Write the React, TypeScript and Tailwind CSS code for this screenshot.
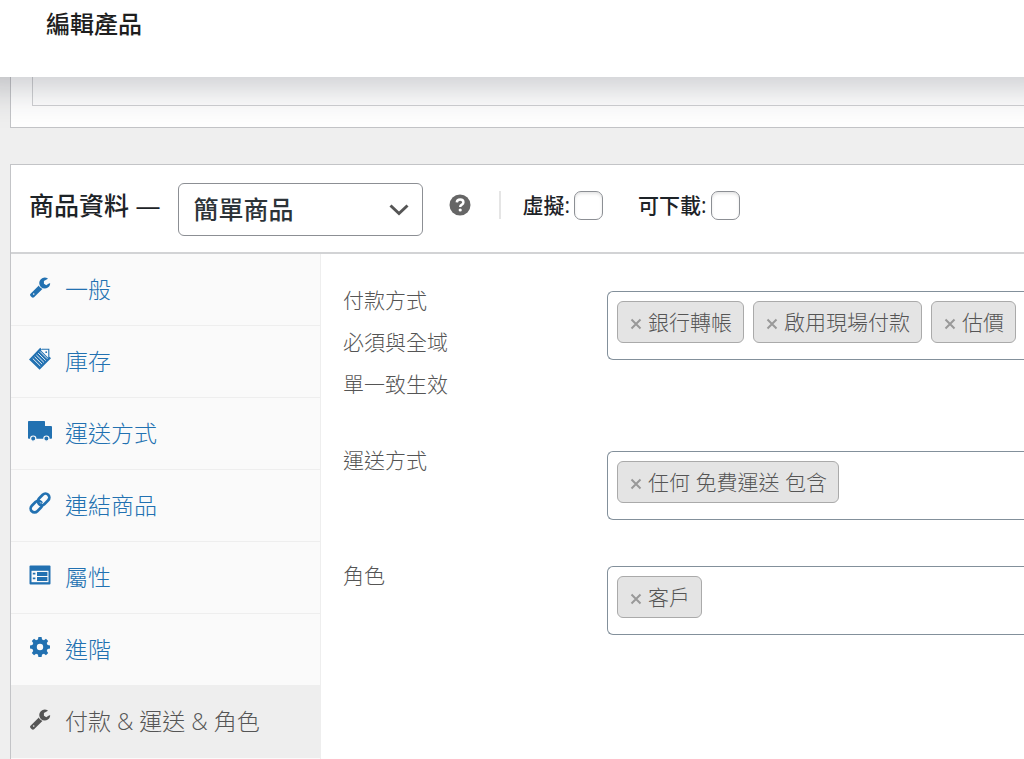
import { useState, type ReactNode } from "react";

function WrenchIcon() {
  return (
    <svg viewBox="0 0 1792 1792" className="size-[22px]" fill="currentColor" aria-hidden="true">
      <path d="M448 1472q0-26-19-45t-45-19-45 19-19 45 19 45 45 19 45-19 19-45zm644-420l-682 682q-37 37-90 37-52 0-91-37l-106-108q-38-36-38-90 0-53 38-91l681-681q39 98 114.5 173.5t173.5 114.5zm634-435q0 39-23 106-47 134-164.5 217.5t-258.5 83.5q-185 0-316.5-131.5t-131.5-316.5 131.5-316.5 316.5-131.5q58 0 121.5 16.5t107.5 46.5q16 11 16 28t-16 28l-293 169v224l193 107q5-3 79-48.5t135.5-81 70.5-35.5q15 0 23.5 10t8.5 25z" />
    </svg>
  );
}

function InventoryIcon() {
  return (
    <svg viewBox="0 0 24 24" className="size-6" fill="none" aria-hidden="true">
      <path d="M14 2.2h6.8v8.6" stroke="currentColor" strokeWidth="1.1" />
      <circle cx="18.2" cy="5.2" r=".9" fill="currentColor" />
      <path d="M12.2 .8L13.9 2.4L13 3.6L20.2 10.8L21.6 9.8L23 11.2L11.6 22.8L1 12.4z" fill="currentColor" />
      <path d="M12 4.4L19.4 11.8M10.2 6.2L17.7 13.6M8.4 8L15.9 15.4M6.6 9.8L14.1 17.2M4.8 11.6L12.3 19" stroke="#fafafa" strokeWidth=".9" />
    </svg>
  );
}

function TruckIcon() {
  return (
    <svg viewBox="0 0 24 24" className="size-6" aria-hidden="true">
      <path d="M.8 2h15.4q.8 0 .8.8V7h6q1 0 1 1v11q0 .8-.8.8H.8q-.8 0-.8-.8V2.8Q0 2 .8 2z" fill="currentColor" />
      <g fill="currentColor" stroke="#fafafa" strokeWidth="1.2">
        <circle cx="5.2" cy="19.6" r="2.6" />
        <circle cx="18.4" cy="19.6" r="2.6" />
      </g>
    </svg>
  );
}

function ChainIcon() {
  return (
    <svg viewBox="0 0 24 24" className="size-6" fill="none" aria-hidden="true">
      <g transform="rotate(-45 12 12)" stroke="currentColor" strokeWidth="2.7">
        <rect x="0.4" y="8.1" width="13" height="7.8" rx="3.9" />
        <path d="M12.5 15.9h7.2" stroke="#fafafa" strokeWidth="4.6" />
        <path d="M11.2 12.6V12" stroke="#fafafa" strokeWidth="4.6" />
        <rect x="10.6" y="8.1" width="13" height="7.8" rx="3.9" />
      </g>
    </svg>
  );
}

function AttributesIcon() {
  return (
    <svg viewBox="0 0 22 20" className="h-5 w-[22px]" aria-hidden="true">
      <rect x=".5" y=".5" width="21" height="19" rx="1" fill="currentColor" />
      <path d="M2.5 5.8h17v11.4h-17z" fill="#fafafa" />
      <path d="M8 7h10.4v4H8zM8 12h10.4v4H8zM3.8 7.8h2.6v1.6H3.8zM3.8 12.6h2.6v1.6H3.8z" fill="currentColor" />
    </svg>
  );
}

function GearIcon() {
  return (
    <svg viewBox="0 0 20 20" className="size-5" aria-hidden="true">
      <circle cx="10" cy="10" r="5.5" fill="none" stroke="currentColor" strokeWidth="4.6" />
      <g fill="currentColor">
        <path d="M7.8 3.6L8.4 0h3.2l.6 3.6zM7.8 16.4l.6 3.6h3.2l.6-3.6z" />
        <path d="M7.8 3.6L8.4 0h3.2l.6 3.6zM7.8 16.4l.6 3.6h3.2l.6-3.6z" transform="rotate(45 10 10)" />
        <path d="M7.8 3.6L8.4 0h3.2l.6 3.6zM7.8 16.4l.6 3.6h3.2l.6-3.6z" transform="rotate(90 10 10)" />
        <path d="M7.8 3.6L8.4 0h3.2l.6 3.6zM7.8 16.4l.6 3.6h3.2l.6-3.6z" transform="rotate(135 10 10)" />
      </g>
    </svg>
  );
}

const tabs: { label: string; icon: ReactNode }[] = [
  { label: "一般", icon: <WrenchIcon /> },
  { label: "庫存", icon: <InventoryIcon /> },
  { label: "運送方式", icon: <TruckIcon /> },
  { label: "連結商品", icon: <ChainIcon /> },
  { label: "屬性", icon: <AttributesIcon /> },
  { label: "進階", icon: <GearIcon /> },
  { label: "付款 & 運送 & 角色", icon: <WrenchIcon /> },
];

function TagField({ id, lines, initial }: { id: string; lines: string[]; initial: string[] }) {
  const [tags, setTags] = useState(initial);
  return (
    <div className="flex items-start">
      <label htmlFor={id} className="flex w-66 shrink-0 flex-col text-[21px] leading-[42px]">
        {lines.map((line) => (
          <span key={line}>{line}</span>
        ))}
      </label>
      <div className="mt-3 flex min-h-[69px] min-w-0 flex-1 items-start gap-[9px] rounded-l-md border border-r-0 border-[#83909b] bg-white py-[9px] pl-[9px]">
        {tags.map((tag) => (
          <span
            key={tag}
            className="flex h-[42px] shrink-0 items-center gap-1.5 rounded-md border border-[#aaa] bg-[#e4e4e4] pr-[11px] pl-3 text-[21px] leading-[42px]"
          >
            <button
              type="button"
              aria-label={"移除 " + tag}
              onClick={() => setTags(tags.filter((t) => t !== tag))}
              className="flex h-10 w-3 items-center justify-center pt-1 text-[#999]"
            >
              <svg viewBox="0 0 12 12" className="size-3" fill="none" stroke="currentColor" strokeWidth="2" aria-hidden="true">
                <path d="M1.5 1.5l9 9M10.5 1.5l-9 9" />
              </svg>
            </button>
            {tag}
          </span>
        ))}
        <input id={id} type="search" className="h-[42px] w-0 min-w-0 flex-1 bg-transparent text-[21px] outline-none" />
      </div>
    </div>
  );
}

function CheckOption({ id, label }: { id: string; label: string }) {
  return (
    <div className="flex items-center gap-1">
      <label htmlFor={id} className="text-[21px] leading-8 font-medium text-[#1d2327]">
        {label}
      </label>
      <input
        id={id}
        type="checkbox"
        className="size-[29px] appearance-none rounded-[7px] border border-[#8c8f94] bg-white shadow-[inset_0_2px_3px_rgba(0,0,0,0.1)] checked:bg-[#2271b1]"
      />
    </div>
  );
}

export default function App() {
  const [active, setActive] = useState(6);
  return (
    <div className="min-h-screen overflow-hidden bg-[#efefef] font-['Open_Sans','Noto_Sans_CJK_TC',sans-serif] font-light text-[#555]">
      <header className="relative z-10 bg-white px-[46px] pt-1.5 pb-[35px] shadow-[0_-30px_36px_40px_rgba(30,35,50,0.25)]">
        <h1 className="text-2xl leading-9 font-medium text-[#1e1e1e]">編輯產品</h1>
      </header>

      <main className="flex flex-col gap-9 pl-2.5">
        <section className="border-b border-l border-[#c3c4c7] bg-white pb-[21px] pl-[21px]">
          <div className="h-[29px] border-b border-l border-[#d0d1d3]" />
        </section>

        <section className="border-t border-l border-[#c3c4c7] bg-white">
          <div className="flex items-start border-b-2 border-[#d2d3d5] pt-[18px] pb-4 pl-[18px]">
            <h2 className="text-[25px] leading-[44px] font-medium whitespace-nowrap text-[#1d2327]">商品資料 —</h2>
            <div className="relative ml-[17px]">
              <select
                aria-label="商品類型"
                className="h-[53px] w-[245px] appearance-none rounded-md border border-[#8c8f94] bg-white pl-[15px] text-[25px] font-medium text-[#2c3338]"
              >
                <option>簡單商品</option>
                <option>組合商品</option>
              </select>
              <svg viewBox="0 0 20 12" className="pointer-events-none absolute top-[21px] right-3.5 h-3 w-5" fill="none" stroke="#555" strokeWidth="3" aria-hidden="true">
                <path d="M1.5 1.5L10 9.5l8.5-8" />
              </svg>
            </div>
            <div className="flex h-11 items-center">
              <button type="button" aria-label="說明" className="ml-[26px]">
                <svg viewBox="0 0 22 22" className="size-[22px]" aria-hidden="true">
                  <circle cx="11" cy="11" r="10.5" fill="#666" />
                  <path d="M7.8 8.4Q8 5.4 11.2 5.4t3.2 2.8q0 1.5-1.6 2.5-1.6.9-1.6 2.3" fill="none" stroke="#fff" strokeWidth="2.5" />
                  <circle cx="11.2" cy="16" r="1.6" fill="#fff" />
                </svg>
              </button>
              <div className="ml-7 flex h-7 items-center gap-[35px] border-l-2 border-[#e5e5e5] pl-[22px]">
                <CheckOption id="virtual" label="虛擬:" />
                <CheckOption id="downloadable" label="可下載:" />
              </div>
            </div>
          </div>

          <div className="flex">
            <nav className="w-[310px] shrink-0 border-r border-[#eee] bg-[#fafafa] pb-8">
              <ul>
                {tabs.map((tab, index) => (
                  <li key={tab.label}>
                    <a
                      href="#"
                      aria-current={index === active ? "page" : undefined}
                      onClick={(event) => {
                        event.preventDefault();
                        setActive(index);
                      }}
                      className={
                        index === active
                          ? "flex h-[72px] items-center border-b border-[#eee] bg-[#eee] pb-0.5 text-[#555]"
                          : "flex h-[72px] items-center border-b border-[#eee] pb-0.5 text-[#2271b1]"
                      }
                    >
                      <span className="ml-4 flex w-[26px] justify-center pb-1">{tab.icon}</span>
                      <span className="ml-3 text-[23px] leading-9">{tab.label}</span>
                    </a>
                  </li>
                ))}
              </ul>
            </nav>
            <form className="flex min-w-0 flex-1 flex-col gap-[34px] pt-[25px] pl-[22px]">
              <TagField id="payment" lines={["付款方式", "必須與全域", "單一致生效"]} initial={["銀行轉帳", "啟用現場付款", "估價"]} />
              <TagField id="shipping" lines={["運送方式"]} initial={["任何 免費運送 包含"]} />
              <TagField id="role" lines={["角色"]} initial={["客戶"]} />
            </form>
          </div>
        </section>
      </main>
    </div>
  );
}
